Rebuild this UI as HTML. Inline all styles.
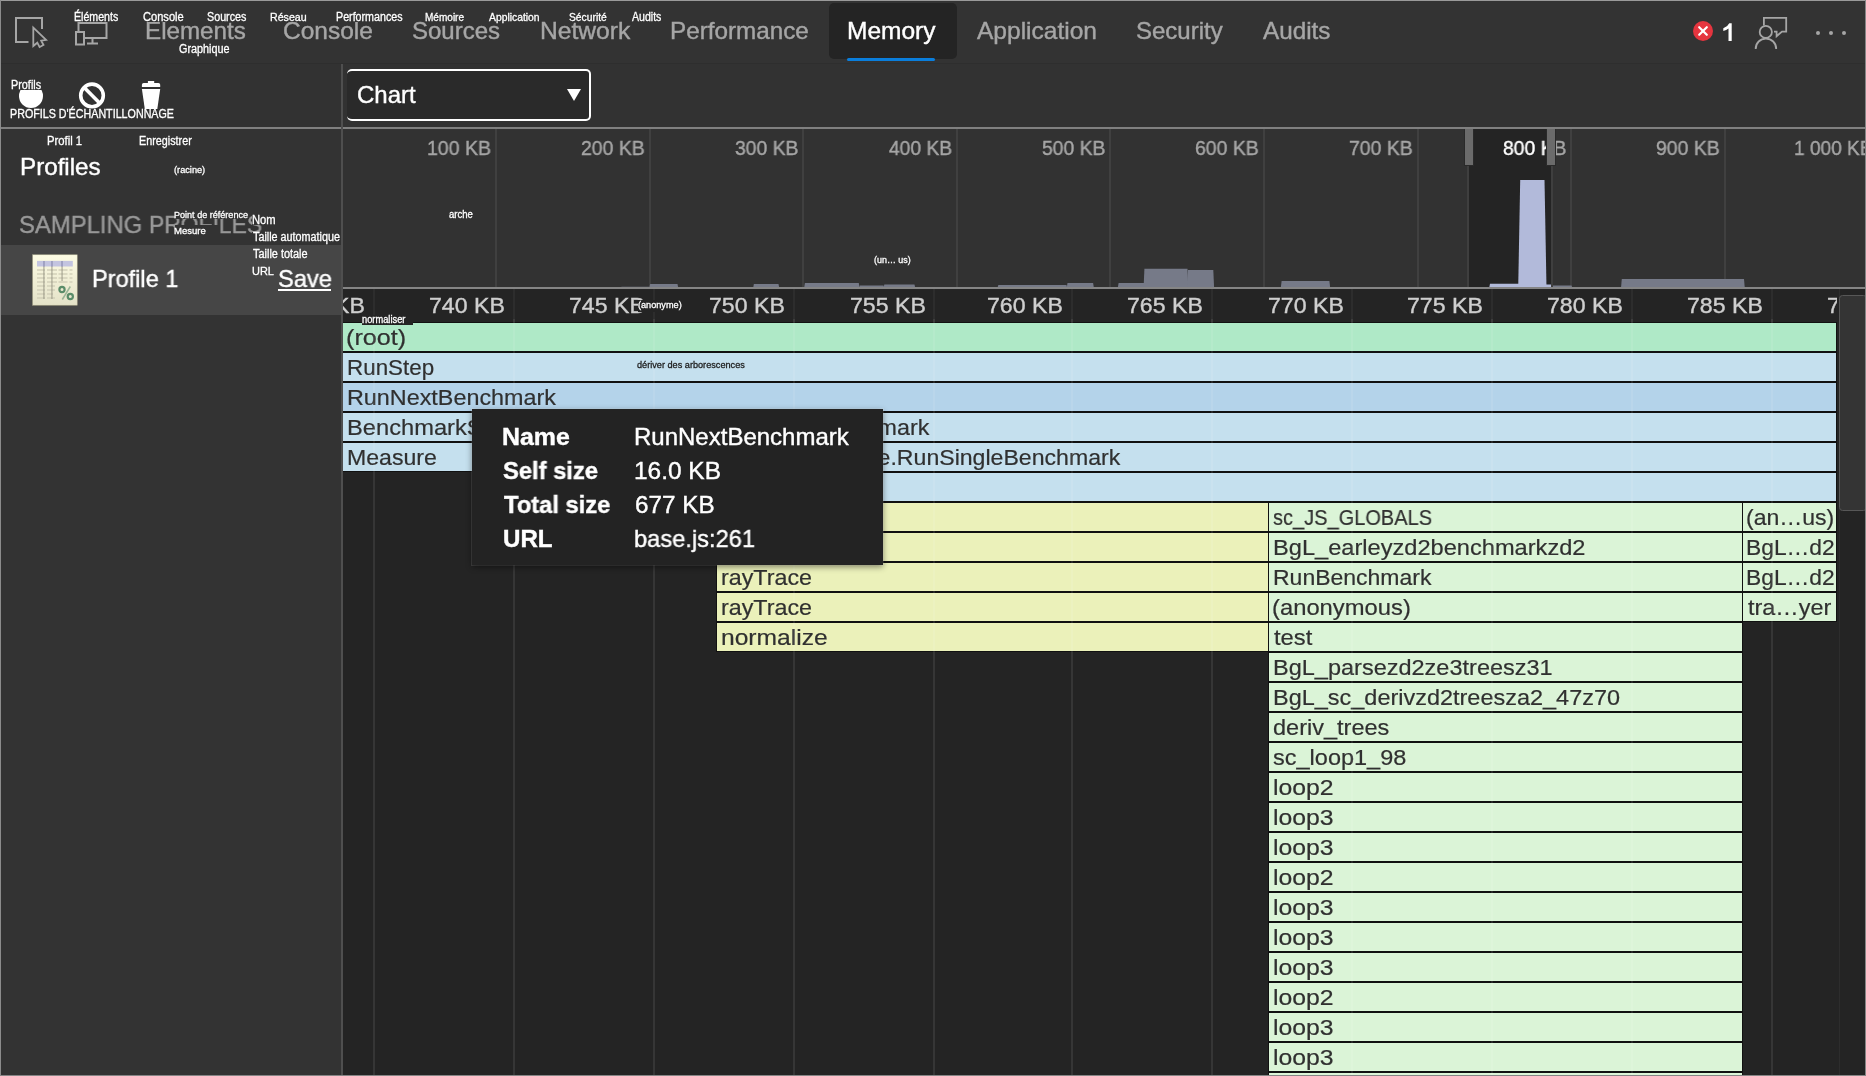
<!DOCTYPE html>
<html><head><meta charset="utf-8"><title>DevTools - Memory</title>
<style>
html,body{margin:0;padding:0;}
body{width:1866px;height:1076px;overflow:hidden;background:#333;font-family:"Liberation Sans", sans-serif;position:relative;}
#root{position:absolute;left:0;top:0;width:1866px;height:1076px;overflow:hidden;}
#root div,#root span,#root svg{position:absolute;display:block;white-space:nowrap;}
</style></head><body><div id="root">
<div style="left:0px;top:0px;width:1866px;height:63px;background:#333333;"></div>
<div style="left:0px;top:63px;width:1866px;height:65px;background:#323232;"></div>
<div style="left:0px;top:63px;width:1866px;height:1px;background:#2e2e2e;"></div>
<div style="left:0px;top:129px;width:342px;height:947px;background:#333333;"></div>
<div style="left:343px;top:129px;width:1523px;height:159px;background:#323232;"></div>
<div style="left:343px;top:289px;width:1523px;height:787px;background:#242424;"></div>
<div style="left:0px;top:127px;width:1866px;height:2px;background:#808080;"></div>
<div style="left:341px;top:64px;width:2px;height:1012px;background:#4f4f4f;z-index:3;"></div>
<svg style="left:10px;top:10px" width="44" height="44" viewBox="0 0 44 44" fill="none" stroke="#a6a6a6" stroke-width="2">
<path d="M18.5 32H6V8h26v11"/><path d="M23.3 17.600v18.400l4-3.300 2.300 4.400 3.900-2.100-2.300-4.300 4.900-.8z" stroke-width="1.8" stroke-linejoin="miter"/></svg>
<svg style="left:70px;top:18px" width="44" height="32" viewBox="0 0 44 32" fill="none" stroke="#a6a6a6" stroke-width="2">
<path d="M8.5 13V5h28v15H15"/><rect x="6" y="14" width="8" height="12.5"/><path d="M17 25.5h11M22.5 20v5.5"/></svg>
<span style="left:144.91px;top:19.00px;font-size:24px;line-height:24px;color:#a6a6a6;transform:scaleX(1.0080);transform-origin:0 0;will-change:transform;-webkit-text-stroke:0.4px;">Elements</span>
<span style="left:283.35px;top:19.00px;font-size:24px;line-height:24px;color:#a6a6a6;transform:scaleX(1.0203);transform-origin:0 0;will-change:transform;-webkit-text-stroke:0.4px;">Console</span>
<span style="left:412.35px;top:19.00px;font-size:24px;line-height:24px;color:#a6a6a6;will-change:transform;-webkit-text-stroke:0.4px;">Sources</span>
<span style="left:539.78px;top:19.00px;font-size:24px;line-height:24px;color:#a6a6a6;transform:scaleX(1.0264);transform-origin:0 0;will-change:transform;-webkit-text-stroke:0.4px;">Network</span>
<span style="left:669.61px;top:19.00px;font-size:24px;line-height:24px;color:#a6a6a6;transform:scaleX(1.0101);transform-origin:0 0;will-change:transform;-webkit-text-stroke:0.4px;">Performance</span>
<span style="left:977.30px;top:19.00px;font-size:24px;line-height:24px;color:#a6a6a6;transform:scaleX(1.0219);transform-origin:0 0;will-change:transform;-webkit-text-stroke:0.4px;">Application</span>
<span style="left:1136.25px;top:19.00px;font-size:24px;line-height:24px;color:#a6a6a6;will-change:transform;-webkit-text-stroke:0.4px;">Security</span>
<span style="left:1262.90px;top:19.00px;font-size:24px;line-height:24px;color:#a6a6a6;transform:scaleX(1.0113);transform-origin:0 0;will-change:transform;-webkit-text-stroke:0.4px;">Audits</span>
<div style="left:829px;top:3px;width:128px;height:56px;background:#242424;border-radius:5px;"></div>
<div style="left:847px;top:57.5px;width:88.3px;height:3.5px;background:#0a7edc;border-radius:2px;"></div>
<span style="left:847.49px;top:19.00px;font-size:24px;line-height:24px;color:#ffffff;transform:scaleX(1.0213);transform-origin:0 0;will-change:transform;-webkit-text-stroke:0.4px;">Memory</span>
<svg style="left:1692px;top:20px" width="22" height="22" viewBox="0 0 22 22"><circle cx="11" cy="11" r="10" fill="#e5353f"/>
<path d="M7.2 7.2l7.6 7.6M14.8 7.2l-7.6 7.6" stroke="#fff" stroke-width="2.2" stroke-linecap="round"/></svg>
<svg style="left:1720px;top:20px" width="16" height="24" viewBox="0 0 16 24"><path d="M11.700 3.300V21H8.500V8.600Q6.300 10.200 3.300 10.900V8.300Q7.600 6.900 9.300 3.300z" fill="#fff"/></svg>
<svg style="left:1752px;top:14px" width="40" height="38" viewBox="0 0 40 38" fill="none" stroke="#a6a6a6" stroke-width="1.8">
<circle cx="13.800" cy="17.900" r="6.100"/><path d="M3.700 35c0-6.300 4.500-10.300 10.200-10.300S24.200 28.700 24.200 35"/>
<path d="M11.900 11.500V3.800h22.300v13.800h-4.200l-5.400 4.600v-4.600h-2.600"/></svg>
<div style="left:1815.8px;top:31px;width:4px;height:4px;background:#a6a6a6;border-radius:2px;"></div>
<div style="left:1828.8px;top:31px;width:4px;height:4px;background:#a6a6a6;border-radius:2px;"></div>
<div style="left:1841.8px;top:31px;width:4px;height:4px;background:#a6a6a6;border-radius:2px;"></div>
<div style="left:73.7px;top:9.4px;width:45.3px;height:12.6px;background:#333333;z-index:5;"></div><span style="left:74.01px;top:11.00px;font-size:12px;line-height:12px;color:#ffffff;transform:scaleX(0.8835);transform-origin:0 0;-webkit-text-stroke:0.3px;z-index:5;">Éléments</span>
<div style="left:142.0px;top:10.2px;width:42.0px;height:12.2px;background:#333333;z-index:5;"></div><span style="left:142.59px;top:11.00px;font-size:12px;line-height:12px;color:#ffffff;transform:scaleX(0.9253);transform-origin:0 0;-webkit-text-stroke:0.3px;z-index:5;">Console</span>
<div style="left:206.3px;top:10.5px;width:40.9px;height:11.9px;background:#333333;z-index:5;"></div><span style="left:207.00px;top:11.00px;font-size:12px;line-height:12px;color:#ffffff;transform:scaleX(0.8951);transform-origin:0 0;-webkit-text-stroke:0.3px;z-index:5;">Sources</span>
<div style="left:270.1px;top:10.7px;width:37.4px;height:11.7px;background:#333333;z-index:5;"></div><span style="left:270.38px;top:12.00px;font-size:11px;line-height:11px;color:#ffffff;transform:scaleX(0.9670);transform-origin:0 0;-webkit-text-stroke:0.3px;z-index:5;">Réseau</span>
<div style="left:335.6px;top:10.2px;width:67.6px;height:12.2px;background:#333333;z-index:5;"></div><span style="left:335.90px;top:11.00px;font-size:12px;line-height:12px;color:#ffffff;transform:scaleX(0.8903);transform-origin:0 0;-webkit-text-stroke:0.3px;z-index:5;">Performances</span>
<div style="left:424.4px;top:10.7px;width:40.1px;height:11.7px;background:#333333;z-index:5;"></div><span style="left:424.73px;top:12.00px;font-size:11px;line-height:11px;color:#ffffff;transform:scaleX(0.9126);transform-origin:0 0;-webkit-text-stroke:0.3px;z-index:5;">Mémoire</span>
<div style="left:488.2px;top:10.9px;width:52.3px;height:13.7px;background:#333333;z-index:5;"></div><span style="left:489.35px;top:12.00px;font-size:11px;line-height:11px;color:#ffffff;transform:scaleX(0.9408);transform-origin:0 0;-webkit-text-stroke:0.3px;z-index:5;">Application</span>
<div style="left:568.1px;top:10.7px;width:39.2px;height:11.7px;background:#333333;z-index:5;"></div><span style="left:568.83px;top:12.00px;font-size:11px;line-height:11px;color:#ffffff;transform:scaleX(0.9357);transform-origin:0 0;-webkit-text-stroke:0.3px;z-index:5;">Sécurité</span>
<div style="left:631.0px;top:9.9px;width:31.3px;height:12.2px;background:#333333;z-index:5;"></div><span style="left:632.15px;top:11.00px;font-size:12px;line-height:12px;color:#ffffff;transform:scaleX(0.8801);transform-origin:0 0;-webkit-text-stroke:0.3px;z-index:5;">Audits</span>
<div style="left:178.5px;top:42.0px;width:51.8px;height:14.6px;background:#333333;z-index:5;"></div><span style="left:179.11px;top:43.00px;font-size:12px;line-height:12px;color:#ffffff;transform:scaleX(0.9014);transform-origin:0 0;-webkit-text-stroke:0.3px;z-index:5;">Graphique</span>
<div style="left:19px;top:83.5px;width:24px;height:24px;background:#ffffff;border-radius:50%;"></div>
<svg style="left:78px;top:81px" width="28" height="28" viewBox="0 0 28 28" fill="none" stroke="#fff" stroke-width="3.6">
<circle cx="14" cy="14.4" r="11.3"/><path d="M6.2 6.600l15.600 15.600"/></svg>
<svg style="left:140px;top:80px" width="22" height="40" viewBox="0 0 22 40" fill="#fff">
<path d="M7.9 1h6.300v1.900h4.200q1.800 0 1.800 1.800v2.300h-18.300v-2.300q0-1.800 1.800-1.800h4.200z"/><path d="M1.900 8.900h18.300l-3.200 22h-11.900z"/></svg>
<div style="left:10.3px;top:78.9px;width:33.2px;height:11.1px;background:#323232;z-index:5;"></div><span style="left:10.59px;top:79.00px;font-size:12px;line-height:12px;color:#ffffff;transform:scaleX(0.9034);transform-origin:0 0;-webkit-text-stroke:0.3px;z-index:5;">Profils</span>
<div style="left:9.2px;top:108.5px;width:165.0px;height:10.4px;background:#323232;z-index:5;"></div><span style="left:9.50px;top:108.00px;font-size:12px;line-height:12px;color:#ffffff;transform:scaleX(0.8929);transform-origin:0 0;-webkit-text-stroke:0.3px;z-index:5;">PROFILS D&#x27;ÉCHANTILLONNAGE</span>
<div style="left:347px;top:69px;width:244px;height:52px;background:#2a2a2a;border:2px solid #fff;border-left:none;border-radius:5px;box-sizing:border-box;"></div>
<span style="left:356.68px;top:83.00px;font-size:24px;line-height:24px;color:#ffffff;will-change:transform;-webkit-text-stroke:0.4px;">Chart</span>
<svg style="left:566px;top:88px" width="16" height="14" viewBox="0 0 16 14"><path d="M1 1h14l-7 12z" fill="#fff"/></svg>
<span style="left:20.31px;top:155.00px;font-size:24px;line-height:24px;color:#ffffff;transform:scaleX(1.0077);transform-origin:0 0;will-change:transform;-webkit-text-stroke:0.4px;">Profiles</span>
<span style="left:19.25px;top:213.00px;font-size:24px;line-height:24px;color:#999999;transform:scaleX(0.9943);transform-origin:0 0;will-change:transform;-webkit-text-stroke:0.4px;">SAMPLING</span>
<span style="left:148.71px;top:213.00px;font-size:24px;line-height:24px;color:#999999;transform:scaleX(0.9524);transform-origin:0 0;will-change:transform;-webkit-text-stroke:0.4px;">PROFILES</span>
<div style="left:1px;top:245px;width:340px;height:70px;background:#464646;"></div>
<svg style="left:30px;top:252px" width="50" height="56" viewBox="0 0 50 56">
<defs><linearGradient id="pg" x1="0" y1="0" x2="0" y2="1"><stop offset="0" stop-color="#fcfbe3"/><stop offset="1" stop-color="#e4e2c8"/></linearGradient>
<filter id="bl" x="-10%" y="-10%" width="120%" height="120%"><feGaussianBlur stdDeviation="0.55"/></filter></defs>
<g filter="url(#bl)">
<rect x="2.700" y="3.300" width="44.500" height="50.400" fill="#3f3d33" opacity="0.55"/>
<rect x="2.700" y="2.800" width="44.500" height="50.400" fill="url(#pg)" stroke="#b5b296" stroke-width="0.500"/>
<rect x="7" y="8.900" width="35.800" height="5.600" fill="#c3c4e0"/>
<g stroke="#cfcdb6" stroke-width="1.500" stroke-dasharray="8 2 10 1.500 9 2 3 20" opacity="0.9"><path d="M7 17.900h35.800M7 21.900h35.800M7 25.900h35.800M7 29.900h35.800"/><path d="M7 33.900h18M7 37.900h18M7 41.900h16M7 45.900h18"/></g>
<g stroke="#8f8d7d" stroke-width="1.700" opacity="0.5"><path d="M13.900 9v38M21.900 9v38M32.100 9v20"/></g>
<g stroke="#9fa0c4" stroke-width="1.800"><path d="M13.900 8.900v5.600M21.900 8.900v5.600M32.100 8.900v5.600"/></g>
<g fill="none" stroke="#5a8c69" stroke-width="2.200"><circle cx="32" cy="37.500" r="2.600"/><circle cx="40.300" cy="44.500" r="2.600"/><path d="M40.300 34.500l-8 13" stroke-width="1.500" opacity="0.55"/></g>
</g></svg>
<span style="left:91.86px;top:267.00px;font-size:24px;line-height:24px;color:#ffffff;transform:scaleX(0.9813);transform-origin:0 0;will-change:transform;-webkit-text-stroke:0.4px;">Profile 1</span>
<span style="left:277.66px;top:267.00px;font-size:24px;line-height:24px;color:#ffffff;transform:scaleX(0.9872);transform-origin:0 0;will-change:transform;-webkit-text-stroke:0.4px;">Save</span>
<div style="left:278px;top:289px;width:53px;height:2px;background:#ffffff;"></div>
<div style="left:46.4px;top:134.3px;width:36.0px;height:12.2px;background:#333333;z-index:5;"></div><span style="left:46.66px;top:135.00px;font-size:12px;line-height:12px;color:#ffffff;transform:scaleX(0.9407);transform-origin:0 0;-webkit-text-stroke:0.3px;z-index:5;">Profil 1</span>
<div style="left:138.4px;top:134.3px;width:54.0px;height:14.6px;background:#333333;z-index:5;"></div><span style="left:138.70px;top:135.00px;font-size:12px;line-height:12px;color:#ffffff;transform:scaleX(0.8985);transform-origin:0 0;-webkit-text-stroke:0.3px;z-index:5;">Enregistrer</span>
<div style="left:173.6px;top:164.2px;width:32.4px;height:12.2px;background:#333333;z-index:5;"></div><span style="left:174.22px;top:165.00px;font-size:9.5px;line-height:9.5px;color:#ffffff;transform:scaleX(0.9682);transform-origin:0 0;-webkit-text-stroke:0.3px;z-index:5;">(racine)</span>
<div style="left:174.8px;top:208.8px;width:74.4px;height:10.5px;background:#333333;z-index:5;"></div><span style="left:174.44px;top:210.00px;font-size:9.5px;line-height:9.5px;color:#ffffff;transform:scaleX(0.9529);transform-origin:0 0;-webkit-text-stroke:0.3px;z-index:5;">Point de référence</span>
<div style="left:174.8px;top:224.8px;width:43.7px;height:10.9px;background:#333333;z-index:5;"></div><span style="left:174.40px;top:226.00px;font-size:9.5px;line-height:9.5px;color:#ffffff;transform:scaleX(1.0051);transform-origin:0 0;-webkit-text-stroke:0.3px;z-index:5;">Mesure</span>
<div style="left:251.9px;top:214.2px;width:24.3px;height:11.0px;background:#333333;z-index:5;"></div><span style="left:252.06px;top:214.00px;font-size:12px;line-height:12px;color:#ffffff;transform:scaleX(0.9349);transform-origin:0 0;-webkit-text-stroke:0.3px;z-index:5;">Nom</span>
<div style="left:251.8px;top:231.8px;width:88.5px;height:13.1px;background:#333333;z-index:5;"></div><span style="left:252.73px;top:231.00px;font-size:12px;line-height:12px;color:#ffffff;transform:scaleX(0.8984);transform-origin:0 0;-webkit-text-stroke:0.3px;z-index:5;">Taille automatique</span>
<div style="left:251.8px;top:247.5px;width:56.2px;height:12.2px;background:#464646;z-index:5;"></div><span style="left:252.72px;top:248.00px;font-size:12px;line-height:12px;color:#ffffff;transform:scaleX(0.9095);transform-origin:0 0;-webkit-text-stroke:0.3px;z-index:5;">Taille totale</span>
<div style="left:251.8px;top:264.9px;width:23.1px;height:11.5px;background:#464646;z-index:5;"></div><span style="left:252.14px;top:266.00px;font-size:11.5px;line-height:11.5px;color:#ffffff;transform:scaleX(0.9537);transform-origin:0 0;-webkit-text-stroke:0.3px;z-index:5;">URL</span>
<div style="left:1469px;top:129px;width:82px;height:158px;background:#242424;"></div>
<div style="left:495px;top:129px;width:2px;height:158px;background:rgba(255,255,255,0.07);"></div>
<div style="left:649px;top:129px;width:2px;height:158px;background:rgba(255,255,255,0.07);"></div>
<div style="left:802px;top:129px;width:2px;height:158px;background:rgba(255,255,255,0.07);"></div>
<div style="left:956px;top:129px;width:2px;height:158px;background:rgba(255,255,255,0.07);"></div>
<div style="left:1109px;top:129px;width:2px;height:158px;background:rgba(255,255,255,0.07);"></div>
<div style="left:1263px;top:129px;width:2px;height:158px;background:rgba(255,255,255,0.07);"></div>
<div style="left:1417px;top:129px;width:2px;height:158px;background:rgba(255,255,255,0.07);"></div>
<div style="left:1570px;top:129px;width:2px;height:158px;background:rgba(255,255,255,0.07);"></div>
<div style="left:1724px;top:129px;width:2px;height:158px;background:rgba(255,255,255,0.07);"></div>
<div style="left:1877px;top:129px;width:2px;height:158px;background:rgba(255,255,255,0.07);"></div>
<span style="left:426.78px;top:138.00px;font-size:20px;line-height:20px;color:#a6a6a6;transform:scaleX(0.9761);transform-origin:0 0;will-change:transform;-webkit-text-stroke:0.4px;">100 KB</span>
<span style="left:580.69px;top:138.00px;font-size:20px;line-height:20px;color:#a6a6a6;transform:scaleX(0.9714);transform-origin:0 0;will-change:transform;-webkit-text-stroke:0.4px;">200 KB</span>
<span style="left:734.60px;top:138.00px;font-size:20px;line-height:20px;color:#a6a6a6;transform:scaleX(0.9666);transform-origin:0 0;will-change:transform;-webkit-text-stroke:0.4px;">300 KB</span>
<span style="left:888.50px;top:138.00px;font-size:20px;line-height:20px;color:#a6a6a6;transform:scaleX(0.9619);transform-origin:0 0;will-change:transform;-webkit-text-stroke:0.4px;">400 KB</span>
<span style="left:1041.80px;top:138.00px;font-size:20px;line-height:20px;color:#a6a6a6;transform:scaleX(0.9666);transform-origin:0 0;will-change:transform;-webkit-text-stroke:0.4px;">500 KB</span>
<span style="left:1195.09px;top:138.00px;font-size:20px;line-height:20px;color:#a6a6a6;transform:scaleX(0.9714);transform-origin:0 0;will-change:transform;-webkit-text-stroke:0.4px;">600 KB</span>
<span style="left:1348.69px;top:138.00px;font-size:20px;line-height:20px;color:#a6a6a6;transform:scaleX(0.9714);transform-origin:0 0;will-change:transform;-webkit-text-stroke:0.4px;">700 KB</span>
<span style="left:1655.89px;top:138.00px;font-size:20px;line-height:20px;color:#a6a6a6;transform:scaleX(0.9714);transform-origin:0 0;will-change:transform;-webkit-text-stroke:0.4px;">900 KB</span>
<span style="left:1793.81px;top:138.00px;font-size:20px;line-height:20px;color:#a6a6a6;transform:scaleX(0.9539);transform-origin:0 0;will-change:transform;-webkit-text-stroke:0.4px;">1 000 KB</span>
<span style="left:1502.60px;top:138.00px;font-size:20px;line-height:20px;color:#a6a6a6;transform:scaleX(0.9666);transform-origin:0 0;will-change:transform;-webkit-text-stroke:0.4px;">800 KB</span>
<div style="left:1469px;top:129px;width:82px;height:40px;overflow:hidden;background:#242424">
<span style="left:33.60px;top:9.00px;font-size:20px;line-height:20px;color:#ffffff;transform:scaleX(0.9666);transform-origin:0 0;will-change:transform;-webkit-text-stroke:0.4px;">800 KB</span>
</div>
<svg style="left:0;top:0" width="1866" height="1076" viewBox="0 0 1866 1076"><polygon points="620.7,288.0 621.5,286.5 649.5,286.5 650.3,288.0" fill="#50525b"/><polygon points="649.3,288.0 650.1,284.0 677.5,284.0 678.3,288.0" fill="#767a88"/><polygon points="699.7,288.0 700.5,287.0 752.5,287.0 753.3,288.0" fill="#484a52"/><polygon points="753.1,288.0 753.9,284.0 778.5,284.0 779.3,288.0" fill="#767a88"/><polygon points="804.1,288.0 804.9,283.0 858.8,283.0 859.6,288.0" fill="#767a88"/><polygon points="859.0,288.0 859.8,285.5 883.5,285.5 884.3,288.0" fill="#767a88"/><polygon points="883.5,288.0 884.3,284.5 914.5,284.5 915.3,288.0" fill="#767a88"/><polygon points="914.7,288.0 915.5,287.0 939.5,287.0 940.3,288.0" fill="#484a52"/><polygon points="997.5,288.0 998.3,285.0 1066.5,285.0 1067.3,288.0" fill="#767a88"/><polygon points="1066.7,288.0 1067.5,283.0 1093.1,283.0 1093.9,288.0" fill="#767a88"/><polygon points="1117.8,288.0 1118.6,283.0 1144.0,283.0 1144.8,288.0" fill="#767a88"/><polygon points="1143.6,288.0 1144.4,268.8 1187.5,268.8 1188.3,288.0" fill="#767a88"/><polygon points="1187.2,288.0 1188.0,269.9 1213.3,269.9 1214.1,288.0" fill="#767a88"/><polygon points="1280.8,288.0 1281.6,280.9 1329.4,280.9 1330.2,288.0" fill="#767a88"/><polygon points="1551.7,288.0 1552.5,285.5 1571.5,285.5 1572.3,288.0" fill="#767a88"/><polygon points="1571.7,288.0 1572.5,287.2 1599.5,287.2 1600.3,288.0" fill="#50525b"/><polygon points="1621.0,288.0 1621.8,278.9 1744.0,278.9 1744.8,288.0" fill="#767a88"/><polygon points="1489.2,288.0 1490.0,283.8 1519.5,283.8 1520.3,288.0" fill="#b2bada"/><polygon points="1543.9,288.0 1544.1,284.6 1551.4,284.6 1551.6,288.0" fill="#b2bada"/><polygon points="1518.2,288.0 1520.2,180.0 1544.5,180.0 1546.5,288.0" fill="#b2bada"/></svg>
<div style="left:1467px;top:165px;width:2px;height:122px;background:#3f3f3f;"></div>
<div style="left:1464px;top:129px;width:8px;height:36px;background:#6b6b6b;border:1px solid #2a2a2a;border-top:none;"></div>
<div style="left:1551px;top:165px;width:2px;height:122px;background:#3f3f3f;"></div>
<div style="left:1546px;top:129px;width:8px;height:36px;background:#6b6b6b;border:1px solid #2a2a2a;border-top:none;"></div>
<div style="left:343px;top:287px;width:1523px;height:2px;background:#858585;"></div>
<div style="left:447.8px;top:208.9px;width:25.4px;height:10.8px;background:#323232;z-index:5;"></div><span style="left:448.57px;top:210.00px;font-size:10px;line-height:10px;color:#ffffff;transform:scaleX(0.9544);transform-origin:0 0;-webkit-text-stroke:0.3px;z-index:5;">arche</span>
<div style="left:873.0px;top:254.1px;width:38.0px;height:12.2px;background:#323232;z-index:5;"></div><span style="left:873.63px;top:255.00px;font-size:9.5px;line-height:9.5px;color:#ffffff;transform:scaleX(0.9406);transform-origin:0 0;-webkit-text-stroke:0.3px;z-index:5;">(un… us)</span>
<div style="left:343px;top:289px;width:1494px;height:34px;overflow:hidden">
<span style="left:-53.58px;top:6.00px;font-size:22.5px;line-height:22.5px;color:#cfcfcf;transform:scaleX(1.0278);transform-origin:0 0;will-change:transform;-webkit-text-stroke:0.4px;">735 KB</span>
<span style="left:86.22px;top:6.00px;font-size:22.5px;line-height:22.5px;color:#cfcfcf;transform:scaleX(1.0278);transform-origin:0 0;will-change:transform;-webkit-text-stroke:0.4px;">740 KB</span>
<span style="left:225.92px;top:6.00px;font-size:22.5px;line-height:22.5px;color:#cfcfcf;transform:scaleX(1.0278);transform-origin:0 0;will-change:transform;-webkit-text-stroke:0.4px;">745 KB</span>
<span style="left:366.32px;top:6.00px;font-size:22.5px;line-height:22.5px;color:#cfcfcf;transform:scaleX(1.0278);transform-origin:0 0;will-change:transform;-webkit-text-stroke:0.4px;">750 KB</span>
<span style="left:506.52px;top:6.00px;font-size:22.5px;line-height:22.5px;color:#cfcfcf;transform:scaleX(1.0278);transform-origin:0 0;will-change:transform;-webkit-text-stroke:0.4px;">755 KB</span>
<span style="left:644.02px;top:6.00px;font-size:22.5px;line-height:22.5px;color:#cfcfcf;transform:scaleX(1.0278);transform-origin:0 0;will-change:transform;-webkit-text-stroke:0.4px;">760 KB</span>
<span style="left:784.32px;top:6.00px;font-size:22.5px;line-height:22.5px;color:#cfcfcf;transform:scaleX(1.0278);transform-origin:0 0;will-change:transform;-webkit-text-stroke:0.4px;">765 KB</span>
<span style="left:924.52px;top:6.00px;font-size:22.5px;line-height:22.5px;color:#cfcfcf;transform:scaleX(1.0278);transform-origin:0 0;will-change:transform;-webkit-text-stroke:0.4px;">770 KB</span>
<span style="left:1064.32px;top:6.00px;font-size:22.5px;line-height:22.5px;color:#cfcfcf;transform:scaleX(1.0278);transform-origin:0 0;will-change:transform;-webkit-text-stroke:0.4px;">775 KB</span>
<span style="left:1204.42px;top:6.00px;font-size:22.5px;line-height:22.5px;color:#cfcfcf;transform:scaleX(1.0278);transform-origin:0 0;will-change:transform;-webkit-text-stroke:0.4px;">780 KB</span>
<span style="left:1344.42px;top:6.00px;font-size:22.5px;line-height:22.5px;color:#cfcfcf;transform:scaleX(1.0278);transform-origin:0 0;will-change:transform;-webkit-text-stroke:0.4px;">785 KB</span>
<span style="left:1484.32px;top:6.00px;font-size:22.5px;line-height:22.5px;color:#cfcfcf;transform:scaleX(1.0278);transform-origin:0 0;will-change:transform;-webkit-text-stroke:0.4px;">790 KB</span>
</div>
<div style="left:343px;top:323px;width:1493px;height:28px;background:#afe9c7;box-shadow:0 0 0 1px #111;"></div>
<span style="left:346.22px;top:327.00px;font-size:22px;line-height:22px;color:#303030;transform:scaleX(1.1450);transform-origin:0 0;will-change:transform;-webkit-text-stroke:0.2px;">(root)</span>
<div style="left:343px;top:353px;width:1493px;height:28px;background:#c5e0ee;box-shadow:0 0 0 1px #111;"></div>
<span style="left:346.85px;top:357.00px;font-size:22px;line-height:22px;color:#303030;transform:scaleX(1.0180);transform-origin:0 0;will-change:transform;-webkit-text-stroke:0.2px;">RunStep</span>
<div style="left:343px;top:383px;width:1493px;height:28px;background:#b4d3ea;box-shadow:0 0 0 1px #111;"></div>
<span style="left:346.78px;top:387.00px;font-size:22px;line-height:22px;color:#303030;transform:scaleX(1.0615);transform-origin:0 0;will-change:transform;-webkit-text-stroke:0.2px;">RunNextBenchmark</span>
<div style="left:343px;top:413px;width:373px;height:28px;background:#c5e0ee;box-shadow:0 0 0 1px #111;"></div>
<span style="left:346.75px;top:417.00px;font-size:22px;line-height:22px;color:#303030;transform:scaleX(1.0765);transform-origin:0 0;will-change:transform;-webkit-text-stroke:0.2px;">BenchmarkSuite.RunStep</span>
<div style="left:717px;top:413px;width:1119px;height:28px;background:#c5e0ee;box-shadow:0 0 0 1px #111;"></div>
<span style="left:720.78px;top:417.00px;font-size:22px;line-height:22px;color:#303030;transform:scaleX(1.0584);transform-origin:0 0;will-change:transform;-webkit-text-stroke:0.2px;">RunNextBenchmark</span>
<div style="left:343px;top:443px;width:373px;height:28px;background:#c5e0ee;box-shadow:0 0 0 1px #111;"></div>
<span style="left:346.80px;top:447.00px;font-size:22px;line-height:22px;color:#303030;transform:scaleX(1.0496);transform-origin:0 0;will-change:transform;-webkit-text-stroke:0.2px;">Measure</span>
<div style="left:717px;top:443px;width:1119px;height:28px;background:#c5e0ee;box-shadow:0 0 0 1px #111;"></div>
<span style="left:720.80px;top:447.00px;font-size:22px;line-height:22px;color:#303030;transform:scaleX(1.0498);transform-origin:0 0;will-change:transform;-webkit-text-stroke:0.2px;">BenchmarkSuite.RunSingleBenchmark</span>
<div style="left:717px;top:473px;width:1119px;height:28px;background:#c5e0ee;box-shadow:0 0 0 1px #111;"></div>
<div style="left:717px;top:503px;width:550.5px;height:28px;background:#ebf1ba;box-shadow:0 0 0 1px #111;"></div>
<div style="left:717px;top:533px;width:550.5px;height:28px;background:#ebf1ba;box-shadow:0 0 0 1px #111;"></div>
<div style="left:717px;top:563px;width:550.5px;height:28px;background:#ebf1ba;box-shadow:0 0 0 1px #111;"></div>
<span style="left:721.14px;top:567.00px;font-size:22px;line-height:22px;color:#303030;transform:scaleX(1.0584);transform-origin:0 0;will-change:transform;-webkit-text-stroke:0.2px;">rayTrace</span>
<div style="left:717px;top:593px;width:550.5px;height:28px;background:#ebf1ba;box-shadow:0 0 0 1px #111;"></div>
<span style="left:721.14px;top:597.00px;font-size:22px;line-height:22px;color:#303030;transform:scaleX(1.0584);transform-origin:0 0;will-change:transform;-webkit-text-stroke:0.2px;">rayTrace</span>
<div style="left:717px;top:623px;width:550.5px;height:28px;background:#ebf1ba;box-shadow:0 0 0 1px #111;"></div>
<span style="left:721.06px;top:627.00px;font-size:22px;line-height:22px;color:#303030;transform:scaleX(1.1181);transform-origin:0 0;will-change:transform;-webkit-text-stroke:0.2px;">normalize</span>
<div style="left:1269px;top:503px;width:472.5999999999999px;height:28px;background:#dbf4d7;box-shadow:0 0 0 1px #111;"></div>
<span style="left:1273.39px;top:507.00px;font-size:22px;line-height:22px;color:#303030;transform:scaleX(0.9096);transform-origin:0 0;will-change:transform;-webkit-text-stroke:0.2px;">sc_JS_GLOBALS</span>
<div style="left:1269px;top:533px;width:472.5999999999999px;height:28px;background:#dbf4d7;box-shadow:0 0 0 1px #111;"></div>
<span style="left:1272.75px;top:537.00px;font-size:22px;line-height:22px;color:#303030;transform:scaleX(1.0736);transform-origin:0 0;will-change:transform;-webkit-text-stroke:0.2px;">BgL_earleyzd2benchmarkzd2</span>
<div style="left:1269px;top:563px;width:472.5999999999999px;height:28px;background:#dbf4d7;box-shadow:0 0 0 1px #111;"></div>
<span style="left:1272.80px;top:567.00px;font-size:22px;line-height:22px;color:#303030;transform:scaleX(1.0449);transform-origin:0 0;will-change:transform;-webkit-text-stroke:0.2px;">RunBenchmark</span>
<div style="left:1269px;top:593px;width:472.5999999999999px;height:28px;background:#dbf4d7;box-shadow:0 0 0 1px #111;"></div>
<span style="left:1272.28px;top:597.00px;font-size:22px;line-height:22px;color:#303030;transform:scaleX(1.0814);transform-origin:0 0;will-change:transform;-webkit-text-stroke:0.2px;">(anonymous)</span>
<div style="left:1269px;top:623px;width:472.5999999999999px;height:28px;background:#dbf4d7;box-shadow:0 0 0 1px #111;"></div>
<span style="left:1273.70px;top:627.00px;font-size:22px;line-height:22px;color:#303030;transform:scaleX(1.0806);transform-origin:0 0;will-change:transform;-webkit-text-stroke:0.2px;">test</span>
<div style="left:1269px;top:653px;width:472.5999999999999px;height:28px;background:#dbf4d7;box-shadow:0 0 0 1px #111;"></div>
<span style="left:1272.76px;top:657.00px;font-size:22px;line-height:22px;color:#303030;transform:scaleX(1.0686);transform-origin:0 0;will-change:transform;-webkit-text-stroke:0.2px;">BgL_parsezd2ze3treesz31</span>
<div style="left:1269px;top:683px;width:472.5999999999999px;height:28px;background:#dbf4d7;box-shadow:0 0 0 1px #111;"></div>
<span style="left:1272.77px;top:687.00px;font-size:22px;line-height:22px;color:#303030;transform:scaleX(1.0667);transform-origin:0 0;will-change:transform;-webkit-text-stroke:0.2px;">BgL_sc_derivzd2treesza2_47z70</span>
<div style="left:1269px;top:713px;width:472.5999999999999px;height:28px;background:#dbf4d7;box-shadow:0 0 0 1px #111;"></div>
<span style="left:1272.97px;top:717.00px;font-size:22px;line-height:22px;color:#303030;transform:scaleX(1.0684);transform-origin:0 0;will-change:transform;-webkit-text-stroke:0.2px;">deriv_trees</span>
<div style="left:1269px;top:743px;width:472.5999999999999px;height:28px;background:#dbf4d7;box-shadow:0 0 0 1px #111;"></div>
<span style="left:1273.33px;top:747.00px;font-size:22px;line-height:22px;color:#303030;transform:scaleX(1.0685);transform-origin:0 0;will-change:transform;-webkit-text-stroke:0.2px;">sc_loop1_98</span>
<div style="left:1269px;top:773px;width:472.5999999999999px;height:28px;background:#dbf4d7;box-shadow:0 0 0 1px #111;"></div>
<span style="left:1273.05px;top:777.00px;font-size:22px;line-height:22px;color:#303030;transform:scaleX(1.1268);transform-origin:0 0;will-change:transform;-webkit-text-stroke:0.2px;">loop2</span>
<div style="left:1269px;top:803px;width:472.5999999999999px;height:28px;background:#dbf4d7;box-shadow:0 0 0 1px #111;"></div>
<span style="left:1273.05px;top:807.00px;font-size:22px;line-height:22px;color:#303030;transform:scaleX(1.1268);transform-origin:0 0;will-change:transform;-webkit-text-stroke:0.2px;">loop3</span>
<div style="left:1269px;top:833px;width:472.5999999999999px;height:28px;background:#dbf4d7;box-shadow:0 0 0 1px #111;"></div>
<span style="left:1273.05px;top:837.00px;font-size:22px;line-height:22px;color:#303030;transform:scaleX(1.1268);transform-origin:0 0;will-change:transform;-webkit-text-stroke:0.2px;">loop3</span>
<div style="left:1269px;top:863px;width:472.5999999999999px;height:28px;background:#dbf4d7;box-shadow:0 0 0 1px #111;"></div>
<span style="left:1273.05px;top:867.00px;font-size:22px;line-height:22px;color:#303030;transform:scaleX(1.1268);transform-origin:0 0;will-change:transform;-webkit-text-stroke:0.2px;">loop2</span>
<div style="left:1269px;top:893px;width:472.5999999999999px;height:28px;background:#dbf4d7;box-shadow:0 0 0 1px #111;"></div>
<span style="left:1273.05px;top:897.00px;font-size:22px;line-height:22px;color:#303030;transform:scaleX(1.1268);transform-origin:0 0;will-change:transform;-webkit-text-stroke:0.2px;">loop3</span>
<div style="left:1269px;top:923px;width:472.5999999999999px;height:28px;background:#dbf4d7;box-shadow:0 0 0 1px #111;"></div>
<span style="left:1273.05px;top:927.00px;font-size:22px;line-height:22px;color:#303030;transform:scaleX(1.1268);transform-origin:0 0;will-change:transform;-webkit-text-stroke:0.2px;">loop3</span>
<div style="left:1269px;top:953px;width:472.5999999999999px;height:28px;background:#dbf4d7;box-shadow:0 0 0 1px #111;"></div>
<span style="left:1273.05px;top:957.00px;font-size:22px;line-height:22px;color:#303030;transform:scaleX(1.1268);transform-origin:0 0;will-change:transform;-webkit-text-stroke:0.2px;">loop3</span>
<div style="left:1269px;top:983px;width:472.5999999999999px;height:28px;background:#dbf4d7;box-shadow:0 0 0 1px #111;"></div>
<span style="left:1273.05px;top:987.00px;font-size:22px;line-height:22px;color:#303030;transform:scaleX(1.1268);transform-origin:0 0;will-change:transform;-webkit-text-stroke:0.2px;">loop2</span>
<div style="left:1269px;top:1013px;width:472.5999999999999px;height:28px;background:#dbf4d7;box-shadow:0 0 0 1px #111;"></div>
<span style="left:1273.05px;top:1017.00px;font-size:22px;line-height:22px;color:#303030;transform:scaleX(1.1268);transform-origin:0 0;will-change:transform;-webkit-text-stroke:0.2px;">loop3</span>
<div style="left:1269px;top:1043px;width:472.5999999999999px;height:28px;background:#dbf4d7;box-shadow:0 0 0 1px #111;"></div>
<span style="left:1273.05px;top:1047.00px;font-size:22px;line-height:22px;color:#303030;transform:scaleX(1.1268);transform-origin:0 0;will-change:transform;-webkit-text-stroke:0.2px;">loop3</span>
<div style="left:1269px;top:1073px;width:472.5999999999999px;height:28px;background:#dbf4d7;box-shadow:0 0 0 1px #111;"></div>
<div style="left:1743.3px;top:503px;width:92.70000000000005px;height:28px;background:#dbf4d7;box-shadow:0 0 0 1px #111;"></div>
<span style="left:1746.42px;top:507.00px;font-size:22px;line-height:22px;color:#303030;transform:scaleX(1.0464);transform-origin:0 0;will-change:transform;-webkit-text-stroke:0.2px;">(an…us)</span>
<div style="left:1743.3px;top:533px;width:92.70000000000005px;height:28px;background:#dbf4d7;box-shadow:0 0 0 1px #111;"></div>
<span style="left:1745.72px;top:537.00px;font-size:22px;line-height:22px;color:#303030;transform:scaleX(1.0361);transform-origin:0 0;will-change:transform;-webkit-text-stroke:0.2px;">BgL…d2</span>
<div style="left:1743.3px;top:563px;width:92.70000000000005px;height:28px;background:#dbf4d7;box-shadow:0 0 0 1px #111;"></div>
<span style="left:1745.72px;top:567.00px;font-size:22px;line-height:22px;color:#303030;transform:scaleX(1.0361);transform-origin:0 0;will-change:transform;-webkit-text-stroke:0.2px;">BgL…d2</span>
<div style="left:1743.3px;top:593px;width:92.70000000000005px;height:28px;background:#dbf4d7;box-shadow:0 0 0 1px #111;"></div>
<span style="left:1747.50px;top:597.00px;font-size:22px;line-height:22px;color:#303030;transform:scaleX(1.0636);transform-origin:0 0;will-change:transform;-webkit-text-stroke:0.2px;">tra…yer</span>
<div style="left:373px;top:289px;width:2px;height:30px;background:rgba(255,255,255,0.045);"></div>
<div style="left:373px;top:319px;width:2px;height:4px;background:rgba(255,255,255,0.11);"></div>
<div style="left:373px;top:323px;width:2px;height:753px;background:rgba(255,255,255,0.085);"></div>
<div style="left:513px;top:289px;width:2px;height:30px;background:rgba(255,255,255,0.045);"></div>
<div style="left:513px;top:319px;width:2px;height:4px;background:rgba(255,255,255,0.11);"></div>
<div style="left:513px;top:323px;width:2px;height:753px;background:rgba(255,255,255,0.085);"></div>
<div style="left:653px;top:289px;width:2px;height:30px;background:rgba(255,255,255,0.045);"></div>
<div style="left:653px;top:319px;width:2px;height:4px;background:rgba(255,255,255,0.11);"></div>
<div style="left:653px;top:323px;width:2px;height:753px;background:rgba(255,255,255,0.085);"></div>
<div style="left:793px;top:289px;width:2px;height:30px;background:rgba(255,255,255,0.045);"></div>
<div style="left:793px;top:319px;width:2px;height:4px;background:rgba(255,255,255,0.11);"></div>
<div style="left:793px;top:323px;width:2px;height:753px;background:rgba(255,255,255,0.085);"></div>
<div style="left:933px;top:289px;width:2px;height:30px;background:rgba(255,255,255,0.045);"></div>
<div style="left:933px;top:319px;width:2px;height:4px;background:rgba(255,255,255,0.11);"></div>
<div style="left:933px;top:323px;width:2px;height:753px;background:rgba(255,255,255,0.085);"></div>
<div style="left:1071px;top:289px;width:2px;height:30px;background:rgba(255,255,255,0.045);"></div>
<div style="left:1071px;top:319px;width:2px;height:4px;background:rgba(255,255,255,0.11);"></div>
<div style="left:1071px;top:323px;width:2px;height:753px;background:rgba(255,255,255,0.085);"></div>
<div style="left:1211px;top:289px;width:2px;height:30px;background:rgba(255,255,255,0.045);"></div>
<div style="left:1211px;top:319px;width:2px;height:4px;background:rgba(255,255,255,0.11);"></div>
<div style="left:1211px;top:323px;width:2px;height:753px;background:rgba(255,255,255,0.085);"></div>
<div style="left:1351px;top:289px;width:2px;height:30px;background:rgba(255,255,255,0.045);"></div>
<div style="left:1351px;top:319px;width:2px;height:4px;background:rgba(255,255,255,0.11);"></div>
<div style="left:1351px;top:323px;width:2px;height:753px;background:rgba(255,255,255,0.085);"></div>
<div style="left:1491px;top:289px;width:2px;height:30px;background:rgba(255,255,255,0.045);"></div>
<div style="left:1491px;top:319px;width:2px;height:4px;background:rgba(255,255,255,0.11);"></div>
<div style="left:1491px;top:323px;width:2px;height:753px;background:rgba(255,255,255,0.085);"></div>
<div style="left:1631px;top:289px;width:2px;height:30px;background:rgba(255,255,255,0.045);"></div>
<div style="left:1631px;top:319px;width:2px;height:4px;background:rgba(255,255,255,0.11);"></div>
<div style="left:1631px;top:323px;width:2px;height:753px;background:rgba(255,255,255,0.085);"></div>
<div style="left:1771px;top:289px;width:2px;height:30px;background:rgba(255,255,255,0.045);"></div>
<div style="left:1771px;top:319px;width:2px;height:4px;background:rgba(255,255,255,0.11);"></div>
<div style="left:1771px;top:323px;width:2px;height:753px;background:rgba(255,255,255,0.085);"></div>
<div style="left:361.7px;top:315.1px;width:51.5px;height:9.8px;background:#242424;z-index:5;"></div><span style="left:361.75px;top:315.00px;font-size:10px;line-height:10px;color:#ffffff;transform:scaleX(0.9303);transform-origin:0 0;-webkit-text-stroke:0.3px;z-index:5;">normaliser</span>
<div style="left:637.6px;top:299.5px;width:45.5px;height:12.1px;background:#242424;z-index:5;"></div><span style="left:637.82px;top:300.00px;font-size:9.5px;line-height:9.5px;color:#ffffff;transform:scaleX(0.9617);transform-origin:0 0;-webkit-text-stroke:0.3px;z-index:5;">(anonyme)</span>
<span style="left:636.81px;top:360.00px;font-size:9.5px;line-height:9.5px;color:#1e1e1e;transform:scaleX(0.9632);transform-origin:0 0;-webkit-text-stroke:0.3px;z-index:5;">dériver des arborescences</span>
<div style="left:1839px;top:289px;width:1px;height:787px;background:#2d2d2d;"></div>
<div style="left:1839px;top:295px;width:28px;height:216px;background:#343434;border:1px solid #575757;border-radius:3.5px;box-sizing:border-box;"></div>
<div style="left:472.3px;top:409px;width:411px;height:156px;background:#232323;box-shadow:0 2px 6px rgba(0,0,0,0.45),0 0 0 1px rgba(255,255,255,0.13);z-index:8;"></div>
<span style="left:502.24px;top:425.00px;font-size:24px;line-height:24px;color:#ffffff;transform:scaleX(1.0368);transform-origin:0 0;font-weight:bold;will-change:transform;-webkit-text-stroke:0.4px;z-index:9;">Name</span>
<span style="left:634.02px;top:425.00px;font-size:24px;line-height:24px;color:#ffffff;will-change:transform;-webkit-text-stroke:0.4px;z-index:9;">RunNextBenchmark</span>
<span style="left:503.43px;top:459.00px;font-size:24px;line-height:24px;color:#ffffff;transform:scaleX(0.9887);transform-origin:0 0;font-weight:bold;will-change:transform;-webkit-text-stroke:0.4px;z-index:9;">Self size</span>
<span style="left:634.37px;top:459.00px;font-size:24px;line-height:24px;color:#ffffff;transform:scaleX(1.0183);transform-origin:0 0;will-change:transform;-webkit-text-stroke:0.4px;z-index:9;">16.0 KB</span>
<span style="left:503.80px;top:493.00px;font-size:24px;line-height:24px;color:#ffffff;transform:scaleX(0.9880);transform-origin:0 0;font-weight:bold;will-change:transform;-webkit-text-stroke:0.4px;z-index:9;">Total size</span>
<span style="left:634.76px;top:493.00px;font-size:24px;line-height:24px;color:#ffffff;transform:scaleX(1.0105);transform-origin:0 0;will-change:transform;-webkit-text-stroke:0.4px;z-index:9;">677 KB</span>
<span style="left:502.67px;top:527.00px;font-size:24px;line-height:24px;color:#ffffff;transform:scaleX(1.0044);transform-origin:0 0;font-weight:bold;will-change:transform;-webkit-text-stroke:0.4px;z-index:9;">URL</span>
<span style="left:634.42px;top:527.00px;font-size:24px;line-height:24px;color:#ffffff;transform:scaleX(0.9860);transform-origin:0 0;will-change:transform;-webkit-text-stroke:0.4px;z-index:9;">base.js:261</span>
<div style="left:0px;top:0px;width:1866px;height:1px;background:#9a9a9a;z-index:20;"></div>
<div style="left:0px;top:0px;width:1px;height:1076px;background:#8c8c8c;z-index:20;"></div>
<div style="left:0px;top:1075px;width:1866px;height:1px;background:#858585;z-index:20;"></div>
<div style="left:1865px;top:0px;width:1px;height:1076px;background:#858585;z-index:20;"></div>
</div></body></html>
